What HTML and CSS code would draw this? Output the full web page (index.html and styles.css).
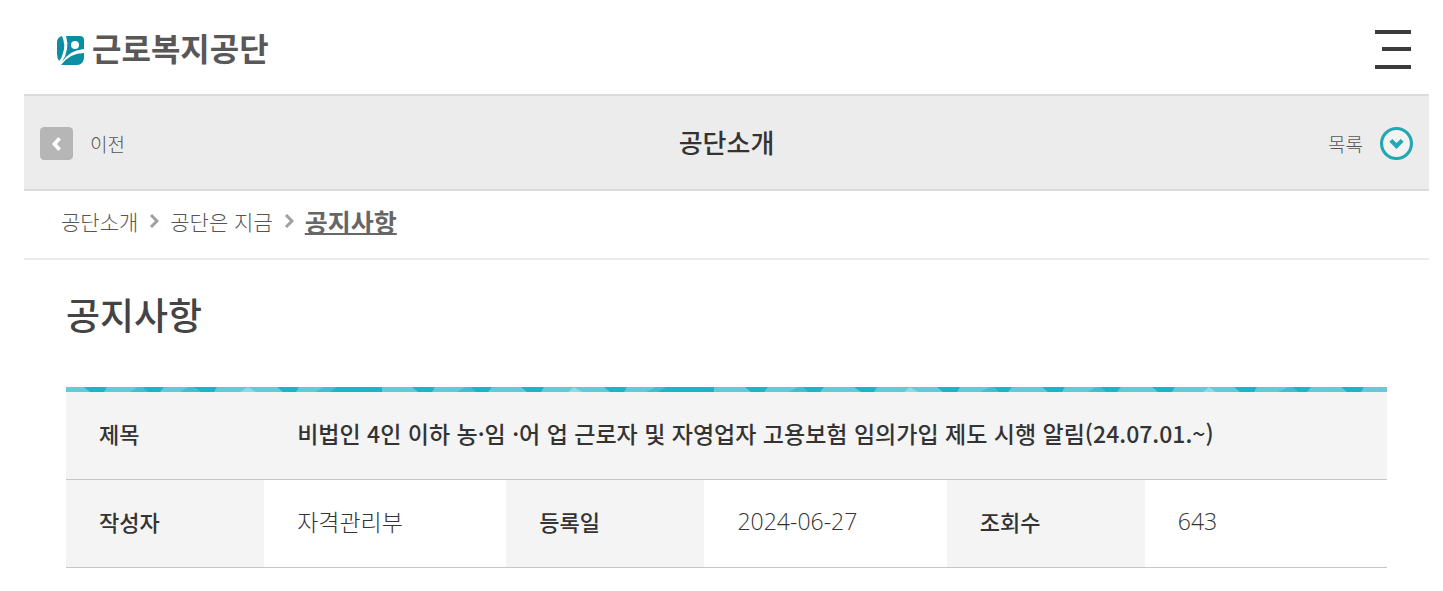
FILE: index.html
```
<!DOCTYPE html>
<html lang="ko">
<head>
<meta charset="utf-8">
<meta name="viewport" content="width=device-width, initial-scale=1">
<title>공지사항 - 근로복지공단</title>
<link rel="stylesheet" href="styles.css">
</head>
<body>
<div class="page">
  <header class="site-header">
    <a class="logo" href="#">
      <svg class="logo-mark" viewBox="0 0 28 30" aria-hidden="true">
        <path fill="#0b8ea3" d="M1 6Q2 2 6 1Q10 10 7 18Q6 23 3 26Q1 23 1 19Z"/>
        <path fill="#0b8ea3" d="M10 1H24Q28 1 28 5V14Q20 15 15 18Q10 21 6 27Q14 14 10 1Z"/>
        <path fill="#0b8ea3" d="M5 30Q14 18 28 18V23Q27 30 21 30Z"/>
        <circle cx="19" cy="10" r="4" fill="#fff"/>
      </svg>
      <span class="logo-text">근로복지공단</span>
    </a>
    <button class="menu-button" type="button" aria-label="메뉴">
      <svg class="menu-icon" viewBox="0 0 36 40" aria-hidden="true">
        <path d="M0 2H36M7 19H36M0 37H36" stroke="#3b3b3b" stroke-width="4"/>
      </svg>
    </button>
  </header>
  <nav class="section-bar">
    <a class="bar-link" href="#">
      <svg class="bar-icon" viewBox="0 0 32 32" aria-hidden="true">
        <rect width="32" height="32" rx="4" fill="#b6b6b6"/>
        <path d="M19 11 14 16.500 19 22" fill="none" stroke="#fff" stroke-width="3.600"/>
      </svg>
      <span>이전</span>
    </a>
    <strong class="section-title">공단소개</strong>
    <a class="bar-link bar-link-end" href="#">
      <span>목록</span>
      <svg class="bar-icon" viewBox="0 0 32 32" aria-hidden="true">
        <circle cx="16" cy="16" r="14.500" fill="#f3f3f3" stroke="#22a7b5" stroke-width="3"/>
        <path d="M10.500 13 16 18.500 21.500 13" fill="none" stroke="#22a7b5" stroke-width="4"/>
      </svg>
    </a>
  </nav>
  <nav class="breadcrumb" aria-label="현재 위치">
    <a href="#">공단소개</a>
    <svg class="crumb-arrow" viewBox="0 0 10 14" aria-hidden="true"><path d="M2 1 8 7 2 13" fill="none" stroke="#a0a0a0" stroke-width="3"/></svg>
    <a href="#">공단은 지금</a>
    <svg class="crumb-arrow" viewBox="0 0 10 14" aria-hidden="true"><path d="M2 1 8 7 2 13" fill="none" stroke="#a0a0a0" stroke-width="3"/></svg>
    <a class="current" href="#" aria-current="page">공지사항</a>
  </nav>
  <main class="content">
    <h1>공지사항</h1>
    <svg class="stripe" viewBox="0 0 1321 5" preserveAspectRatio="none" aria-hidden="true">
      <path fill="#62cbd8" d="M0 0H1321V5H0Z"/>
      <path fill="#41bfd0" d="M64 5 72 0H90V5ZM114 5 122 0H140V5ZM249 5 258 0H275V5ZM391 5 399 0H412V5ZM580 5 590 0H612V5ZM723 5 732 0H748V5ZM914 5 924 0H938V5ZM1022 5 1030 0H1045V5ZM1212 5 1222 0H1236V5Z"/>
      <path fill="#8bdce4" d="M174 5 182 0 190 5ZM502 5 508 0 516 5ZM838 5 844 0 852 5ZM1137 5 1143 0 1150 5Z"/>
      <path fill="#1eb4c8" d="M18 0H41L38 5H24ZM77 0H98L94 5H82ZM128 0H151L148 5H135ZM211 0H233L230 5H217ZM271 0H316V5H264ZM346 0H369L366 5H352ZM405 0H426L422 5H410ZM455 0H478L475 5H461ZM538 0H561L558 5H544ZM600 0H648V5H592ZM679 0H702L698 5H685ZM737 0H758L754 5H742ZM788 0H811L808 5H795ZM871 0H894L891 5H877ZM928 0H946L942 5H933ZM976 0H999L996 5H982ZM1035 0H1055L1051 5H1040ZM1086 0H1109L1106 5H1092ZM1168 0H1191L1188 5H1174ZM1227 0H1245L1241 5H1232ZM1275 0H1298L1295 5H1281Z"/>
    </svg>
    <table class="notice">
      <colgroup>
        <col class="col-label"><col class="col-value">
        <col class="col-label"><col class="col-value">
        <col class="col-label"><col class="col-value">
      </colgroup>
      <tbody>
        <tr>
          <th scope="row">제목</th>
          <td class="subject" colspan="5">비법인 4인 이하 농·임 ·어 업 근로자 및 자영업자 고용보험 임의가입 제도 시행 알림(24.07.01.~)</td>
        </tr>
        <tr>
          <th scope="row">작성자</th>
          <td>자격관리부</td>
          <th scope="row">등록일</th>
          <td class="number">2024-06-27</td>
          <th scope="row">조회수</th>
          <td class="number">643</td>
        </tr>
      </tbody>
    </table>
  </main>
</div>
</body>
</html>
```
FILE: styles.css
```
* {
  box-sizing: border-box;
}

body {
  margin: 0;
  background: #fff;
  color: #333;
  font-family: "Noto Sans CJK KR", sans-serif;
}

a {
  color: inherit;
  text-decoration: none;
}

svg {
  display: block;
}

.page {
  margin: 0 14px 0 24px;
}

.site-header {
  display: flex;
  align-items: center;
  justify-content: space-between;
  height: 94px;
  padding: 5px 18px 0 32px;
}

.logo {
  display: flex;
  align-items: center;
  gap: 8px;
}

.logo-mark {
  width: 28px;
  height: 30px;
}

.logo-text {
  padding-bottom: 6px;
  color: #595757;
  font-size: 32px;
  font-weight: 700;
  line-height: 40px;
}

.menu-button {
  padding: 0;
  border: 0;
  background: none;
}

.menu-icon {
  width: 36px;
  height: 40px;
}

.section-bar {
  display: grid;
  grid-template-columns: 1fr auto 1fr;
  align-items: center;
  height: 97px;
  padding: 2px 16px 0;
  border-top: 2px solid #dcdcdc;
  border-bottom: 2px solid #dcdcdc;
  background: #ececec;
}

.bar-link {
  display: flex;
  align-items: center;
  gap: 17px;
  color: #555;
  font-size: 19px;
  font-weight: 300;
}

.bar-link-end {
  justify-content: flex-end;
}

.bar-icon {
  width: 33px;
  height: 33px;
}

.section-title {
  padding-bottom: 4px;
  font-size: 26px;
  font-weight: 500;
}

.breadcrumb {
  display: flex;
  align-items: center;
  gap: 11px;
  height: 69px;
  padding: 0 37px 8px;
  border-bottom: 2px solid #ebebeb;
  color: #555;
  font-size: 21px;
  font-weight: 300;
}

.crumb-arrow {
  width: 10px;
  height: 14px;
}

.current {
  color: #666;
  font-size: 25px;
  font-weight: 700;
  text-decoration: underline;
  text-decoration-thickness: 2px;
  text-underline-offset: 1px;
}

.content {
  padding: 26px 42px 24px;
}

h1 {
  margin: 0 0 45px;
  color: #444;
  font-size: 37px;
  font-weight: 500;
  line-height: 56px;
}

.stripe {
  width: 100%;
  height: 5px;
}

.notice {
  width: 100%;
  border-collapse: collapse;
  table-layout: fixed;
}

.col-label {
  width: 15%;
}

.notice th,
.notice td {
  height: 88px;
  padding: 0 0 4px 33px;
  border-bottom: 1px solid #c6c6c6;
  text-align: left;
}

.notice tr:first-child > * {
  height: 87px;
}

.notice th {
  background: #f4f4f4;
  font-size: 22px;
  font-weight: 500;
}

.notice td {
  color: #333;
  font-size: 23px;
  font-weight: 300;
}

.notice .number {
  font-family: "Open Sans", "Noto Sans CJK KR", sans-serif;
}

.notice .subject {
  background: #f4f4f4;
  color: #333;
  font-size: 23px;
  font-weight: 500;
}
```
